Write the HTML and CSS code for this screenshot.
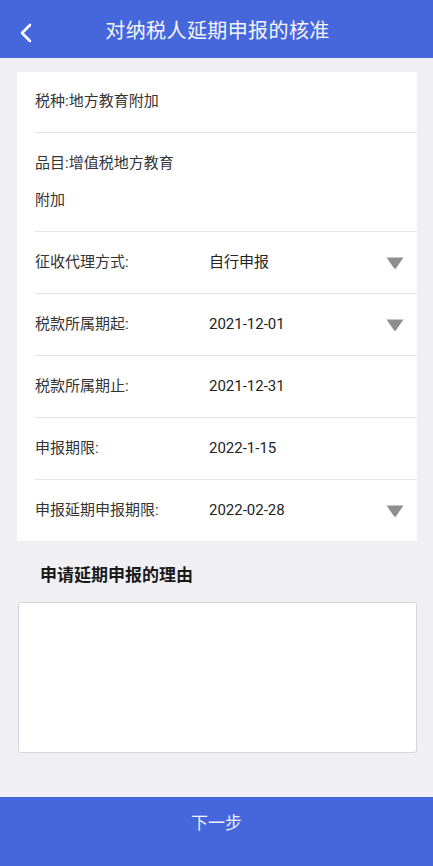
FILE: index.html
```html
<!DOCTYPE html>
<html lang="zh-CN">
<head>
<meta charset="utf-8">
<title>对纳税人延期申报的核准</title>
<link rel="stylesheet" href="styles.css">
</head>
<body>
<div class="page">
  <header class="topbar">
    <span class="back">
      <svg width="14" height="20" viewBox="0 0 14 20"><path d="M11 2 L3 10 L11 18" fill="none" stroke="#ffffff" stroke-width="2.6" stroke-linecap="round" stroke-linejoin="round"/></svg>
    </span>
    <h1 class="title">对纳税人延期申报的核准</h1>
  </header>
  <main class="content">
    <section class="card">
      <div class="row"><span class="full">税种:地方教育附加</span></div>
      <div class="row"><span class="wrap">品目:增值税地方教育附加</span></div>
      <div class="row"><span class="label">征收代理方式:</span><span class="value">自行申报</span><span class="arrow"><svg width="18" height="12" viewBox="0 0 18 12"><path d="M0.5 0.5 H17.5 L10 11.2 Q9 12.3 8 11.2 Z" fill="#8e8e8e"/></svg></span></div>
      <div class="row"><span class="label">税款所属期起:</span><span class="value">2021-12-01</span><span class="arrow"><svg width="18" height="12" viewBox="0 0 18 12"><path d="M0.5 0.5 H17.5 L10 11.2 Q9 12.3 8 11.2 Z" fill="#8e8e8e"/></svg></span></div>
      <div class="row"><span class="label">税款所属期止:</span><span class="value">2021-12-31</span></div>
      <div class="row"><span class="label">申报期限:</span><span class="value">2022-1-15</span></div>
      <div class="row last"><span class="label">申报延期申报期限:</span><span class="value">2022-02-28</span><span class="arrow"><svg width="18" height="12" viewBox="0 0 18 12"><path d="M0.5 0.5 H17.5 L10 11.2 Q9 12.3 8 11.2 Z" fill="#8e8e8e"/></svg></span></div>
    </section>
    <h2 class="section-title">申请延期申报的理由</h2>
    <div class="reason"></div>
  </main>
  <footer class="next">下一步</footer>
</div>
</body>
</html>
```

FILE: styles.css
```css
* { box-sizing: border-box; }
html, body { margin: 0; padding: 0; }
body {
  font-family: Roboto, "Noto Sans CJK SC", "Noto Sans", "Liberation Sans", sans-serif;
  background: #f0eff4;
  color: #333;
}
.page {
  height: 866px;
  display: flex;
  flex-direction: column;
}
.topbar {
  height: 58px;
  flex: 0 0 58px;
  background: #4666dc;
  display: flex;
  align-items: center;
  justify-content: center;
  position: relative;
}
.back {
  position: absolute;
  left: 19px;
  top: 23px;
  width: 14px;
  height: 20px;
  display: flex;
}
.title {
  margin: 0;
  padding-left: 2px;
  font-size: 20px;
  font-weight: 400;
  color: #f4f6ff;
  letter-spacing: 0.4px;
}
.content {
  flex: 1;
  padding: 14px 16px 0 17px;
  display: flex;
  flex-direction: column;
}
.card {
  background: #fff;
  padding-left: 18px;
}
.row {
  display: flex;
  align-items: center;
  padding: 12px 13px 12px 0;
  line-height: 37px;
  font-size: 15px;
  border-bottom: 1px solid #e4e3e8;
  color: #333;
}
.row:first-child { padding-top: 11px; padding-bottom: 12px; }
.row.last { border-bottom: none; }
.wrap { width: 150px; }
.label { width: 174px; flex: 0 0 174px; }
.value { flex: 1; color: #222; }
.arrow { display: flex; width: 18px; height: 12px; }
.section-title {
  margin: 22px 0 0 23px;
  font-size: 17px;
  font-weight: 700;
  color: #1a1a1a;
  line-height: 24px;
}
.reason {
  margin: 15px 0 0 1px;
  height: 151px;
  background: #fff;
  border: 1px solid #d6d5da;
  border-radius: 3px;
}
.next {
  flex: 0 0 69px;
  height: 69px;
  background: #4666dc;
  color: #eef1ff;
  font-size: 17px;
  text-align: center;
  line-height: 52px;
}
```
